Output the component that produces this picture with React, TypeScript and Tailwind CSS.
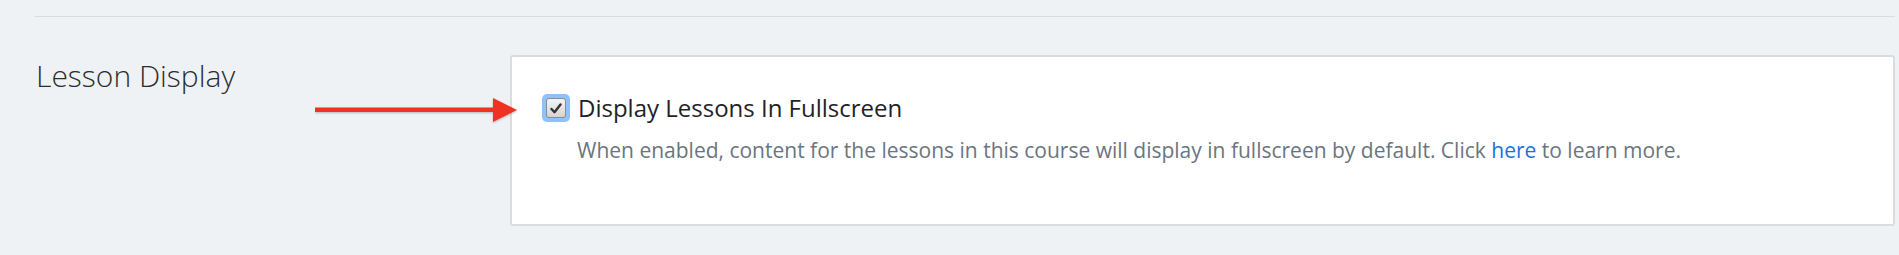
import React from "react";

const Arrow: React.FC = () => (
  <svg
    className="absolute left-[315px] top-[40px]"
    width="208"
    height="30"
    viewBox="0 0 208 30"
  >
    <defs>
      <filter id="sh" x="-5%" y="-30%" width="110%" height="160%">
        <feDropShadow dx="0" dy="1" stdDeviation="1" floodColor="#000" floodOpacity="0.25" />
      </filter>
    </defs>
    <g filter="url(#sh)">
      <rect x="0" y="12.5" width="182" height="4.5" fill="#f03024" />
      <polygon points="178,3 202,15 178,27" fill="#f03024" />
    </g>
  </svg>
);

const Checkbox: React.FC = () => (
  <div className="w-[28px] h-[28px] rounded-[5px] bg-[#8fc2fa] p-[4px] shrink-0">
    <div className="w-full h-full rounded-[3px] border border-[#8b8b8b] bg-gradient-to-b from-[#f4f4f4] to-[#d4d4d4] flex items-center justify-center">
      <svg width="12" height="11" viewBox="0 0 12 11">
        <path d="M1.5 6 L4.5 9.2 L10.5 1.5" fill="none" stroke="#333" strokeWidth="2.4" strokeLinecap="round" strokeLinejoin="round" />
      </svg>
    </div>
  </div>
);

export default function App() {
  return (
    <div className="w-full h-[255px] bg-[#eff2f5] pt-4 pl-[35px] pr-[4px] font-['Open_Sans','Liberation_Sans',sans-serif]">
      <div className="border-t border-[#d9dde1]" />
      <div className="flex mt-[38px]">
        <div className="relative w-[510px] shrink-0 ml-[-35px] pl-[36px]">
          <h2 className="text-[30px] font-light text-[#2a2e33] leading-none pt-[6px]">
            Lesson Display
          </h2>
          <Arrow />
        </div>
        <div className="flex-1 h-[171px] bg-white border-2 border-[#dcdcdc] rounded-[3px] pl-[30px] pt-[37px]">
          <div className="flex items-start gap-[8px]">
            <Checkbox />
            <span className="mt-[2px] text-[24px] text-[#1f2328] leading-none">Display Lessons In Fullscreen</span>
          </div>
          <p className="mt-[18px] ml-[35px] text-[21px] text-[#6b7580] leading-none">
            When enabled, content for the lessons in this course will display in fullscreen by default. Click{" "}
            <a className="text-[#1b72d8]" href="#">here</a> to learn more.
          </p>
        </div>
      </div>
    </div>
  );
}
